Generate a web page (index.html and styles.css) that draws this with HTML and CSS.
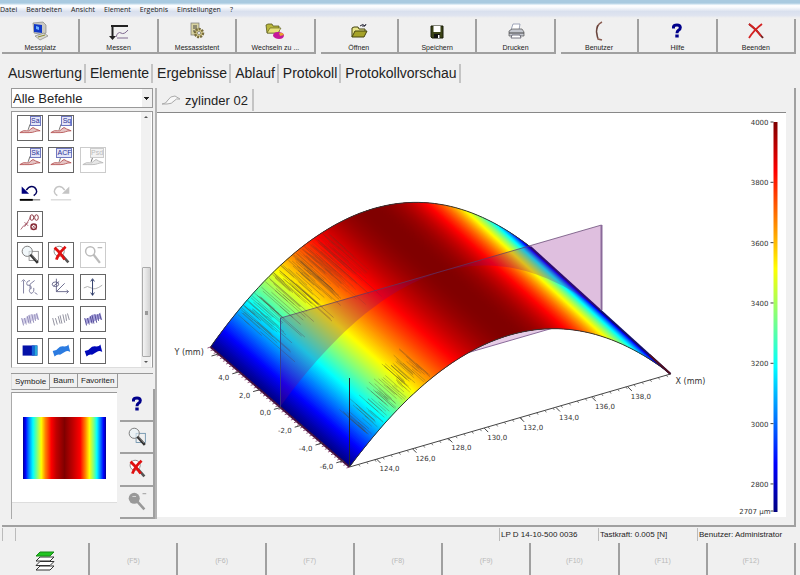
FILE: index.html
```html
<!DOCTYPE html>
<html lang="de">
<head>
    <meta charset="UTF-8">
    <meta name="viewport" content="width=device-width, initial-scale=1.0">
    <title>Auswertung</title>
    <link rel="stylesheet" href="styles.css">
</head>
<body>
    <!-- Gemeinsame Symbole -->
    <svg class="defs" aria-hidden="true">
        <symbol id="i-help" viewBox="0 0 20 20">
            <path d="M6.500 7.500V5.800Q6.800 4 10 4t3.300 2.400Q13.300 8.200 11.500 9.300 10 10.300 10 12.300" fill="none" stroke="#00008b" stroke-width="3"/>
            <rect x="8.300" y="13.500" width="3.400" height="3" fill="#00008b"/>
        </symbol>
        <symbol id="i-lens" viewBox="0 0 26 26">
            <rect x="12" y="9" width="10" height="10" fill="none" stroke="currentColor" stroke-width=".8"/>
            <circle cx="10" cy="9" r="5.500" fill="#eaf3f8" fill-opacity=".6" stroke="#777"/>
            <path d="M13.500 12.500l8 9" stroke="#333" stroke-width="2.800"/>
            <path d="M14.500 12.500l6 7" stroke="#bbb" stroke-width=".6"/>
        </symbol>
        <symbol id="i-lensx" viewBox="0 0 26 26">
            <circle cx="11" cy="9" r="5.500" fill="#fff" stroke="#888"/>
            <path d="M14 13l7 8" stroke="#555" stroke-width="2.800"/>
            <path d="M6 5q6 5 11 13M18 4q-7 6-10 14" fill="none" stroke="#e01010" stroke-width="3"/>
        </symbol>
        <symbol id="i-lensback" viewBox="0 0 26 26">
            <circle cx="10" cy="9" r="5" fill="none" stroke="currentColor" stroke-width="1.600"/>
            <path d="M13.500 12.500l7 9" stroke="currentColor" stroke-width="2.500"/>
            <path d="M18 5h5" stroke="currentColor" stroke-width="1.400"/>
        </symbol>
        <symbol id="i-curve" viewBox="0 0 26 26">
            <path d="M2 18q4-3 7-2t5-2 5 0l5 2q-4 0-6 1t-6 1-10 0z" fill="currentColor" fill-opacity=".35" stroke="currentColor"/>
            <path d="M13 9l-2 6" stroke="#444" stroke-width=".8"/>
        </symbol>
        <symbol id="i-wave" viewBox="0 0 26 26">
            <path d="M4 13q4 0 6-3t7-2q3 0 4-2l2 8q-3-2-6 0t-5 3q-3-1-6 2z"/>
        </symbol>
        <symbol id="i-mesh" viewBox="0 0 26 26">
            <path d="M4 12l2 8M7 12l2 7M10 10l2 8M12 9l2 9M15 8l2 9M18 8l1 7M20 7l2 7" fill="none" stroke="currentColor"/>
        </symbol>
    </svg>

    <div class="titlebar"></div>

    <nav class="menubar">
        <a href="#">Datei</a>
        <a href="#">Bearbeiten</a>
        <a href="#">Ansicht</a>
        <a href="#">Element</a>
        <a href="#">Ergebnis</a>
        <a href="#">Einstellungen</a>
        <a href="#">?</a>
    </nav>

    <!-- Werkzeugleiste -->
    <div class="toolbar">
        <div class="tool-group four">
            <button class="tool">
                <svg viewBox="0 0 20 20">
                    <path d="M3 2l10-1 3 3v8l-3 2-9-2z" fill="#c9c9c2" stroke="#777" stroke-width=".6"/>
                    <path d="M4 3l8 1v8l-8-1z" fill="#1038c8"/><path d="M6 5l3 1v3l-3-1z" fill="#6fb1ff"/>
                    <path d="M5 15l9-3 4 3-8 4z" fill="#d8d8d0" stroke="#777" stroke-width=".6"/>
                    <path d="M8 16l7-2" stroke="#8a8a30"/>
                </svg>
                Messplatz
            </button>
            <button class="tool">
                <svg viewBox="0 0 20 20">
                    <path d="M2 5h17M3.500 5v10" stroke="#222" stroke-width="2" fill="none"/>
                    <path d="M0 15h7l-3.500 4z" fill="#222"/>
                    <path d="M7 16q2-6 5-4t7-3M8 17h11" fill="none" stroke="#806a90"/>
                </svg>
                Messen
            </button>
            <button class="tool">
                <svg viewBox="0 0 20 20">
                    <rect x="4" y="2" width="8" height="12" fill="#d9d3a0" stroke="#777" stroke-width=".7"/>
                    <path d="M6 5h4M6 7h4M6 10h4" stroke="#444"/>
                    <circle cx="12" cy="12" r="4" fill="#d8cd8c" stroke="#776c3c" stroke-width="2.500" stroke-dasharray="2 1"/>
                    <circle cx="12" cy="12" r="1.500" fill="#fff" stroke="#555" stroke-width=".6"/>
                </svg>
                Messassistent
            </button>
            <button class="tool">
                <svg viewBox="0 0 20 20">
                    <path d="M1 4l2-1h4l1 2h6v7H2z" fill="#b9b73c" stroke="#55551a" stroke-width=".8"/>
                    <path d="M2 12l3-5h11l-3 5z" fill="#e6e27a" stroke="#55551a" stroke-width=".6"/>
                    <path d="M8 15q0-4 5-4 5 0 6 3 0 4-5 4-4 0-6-3z" fill="#c4189a"/>
                    <path d="M14 12q4-1 5 2l-4 1z" fill="#e8a030"/>
                </svg>
                Wechseln zu ...
            </button>
        </div>
        <div class="tool-group three">
            <button class="tool">
                <svg viewBox="0 0 20 20">
                    <path d="M3 16V7l2-1h4l1 2h6v3" fill="#e8e58a" stroke="#44440e"/>
                    <path d="M3 16l3-6h12l-3 6z" fill="#a5a228" stroke="#44440e"/>
                    <path d="M11 5q3-3 5 0l1-2M16 5h-3" fill="none" stroke="#223"/>
                </svg>
                Öffnen
            </button>
            <button class="tool">
                <svg viewBox="0 0 20 20">
                    <path d="M4 5h12v12H5l-1-1z" fill="#3a4216" stroke="#181c08"/>
                    <rect x="6.500" y="5" width="7" height="6" fill="#fff"/>
                    <rect x="7" y="13" width="6" height="4" fill="#111"/><rect x="11" y="14" width="1.500" height="3" fill="#fff"/>
                </svg>
                Speichern
            </button>
            <button class="tool">
                <svg viewBox="0 0 20 20">
                    <path d="M7 3h7l-1 6H5z" fill="#fff" stroke="#8890a8" stroke-width=".8"/>
                    <path d="M3 10l3-2h10l2 3v4H3z" fill="#c4c7cf" stroke="#555" stroke-width=".7"/>
                    <path d="M3 12h15" stroke="#444"/><path d="M6 14h8l1 3H5z" fill="#fff" stroke="#556" stroke-width=".8"/>
                </svg>
                Drucken
            </button>
        </div>
        <div class="tool-group three">
            <button class="tool">
                <svg viewBox="0 0 20 20">
                    <path d="M13 1q-6 3-5.500 10 .5 5 1.500 7l4 1" fill="none" stroke="#8a5c50" stroke-width="1.500"/>
                    <path d="M9 4q-3 6 0 13" fill="none" stroke="#3a2a2a" stroke-width=".6"/>
                </svg>
                Benutzer
            </button>
            <button class="tool"><svg><use href="#i-help"/></svg>Hilfe</button>
            <button class="tool">
                <svg viewBox="0 0 20 20">
                    <path d="M3 3q8 6 14 14" fill="none" stroke="#6b2020" stroke-width="1.800"/>
                    <path d="M3 3q6 4 12 12M16 3Q8 9 3 17" fill="none" stroke="#d42222" stroke-width="1.800"/>
                </svg>
                Beenden
            </button>
        </div>
    </div>

    <nav class="tabs">
        <a href="#">Auswertung</a>
        <a href="#">Elemente</a>
        <a href="#">Ergebnisse</a>
        <a href="#">Ablauf</a>
        <a href="#">Protokoll</a>
        <a href="#">Protokollvorschau</a>
    </nav>

    <div class="workspace">
        <!-- Linke Seite: Befehle und Vorschau -->
        <aside class="sidebar">
            <select class="filter" aria-label="Befehle">
                <option>Alle Befehle</option>
            </select>

            <div class="commands">
                <div class="command-grid">
                    <button class="cmd" aria-label="Sa"><svg class="red"><use href="#i-curve"/></svg><span class="tag">Sa</span></button>
                    <button class="cmd" aria-label="Sq"><svg class="red"><use href="#i-curve"/></svg><span class="tag">Sq</span></button>
                    <i></i>
                    <button class="cmd" aria-label="Sk"><svg class="red"><use href="#i-curve"/></svg><span class="tag">Sk</span></button>
                    <button class="cmd" aria-label="ACF"><svg class="red"><use href="#i-curve"/></svg><span class="tag">ACF</span></button>
                    <button class="cmd off" aria-label="Psd" disabled><svg><use href="#i-curve"/></svg><span class="tag">Psd</span></button>
                    <button class="cmd flat" aria-label="Zurück">
                        <svg viewBox="0 0 26 26">
                            <path d="M9 11q4-6 9-3 5 5-1 9" fill="none" stroke="#00005c" stroke-width="1.600"/>
                            <path d="M4 7v8h8z" fill="#00007c"/><path d="M2 21.500h22" stroke="#555"/><path d="M2 21.500h14" stroke="#000" stroke-width="2"/>
                        </svg>
                    </button>
                    <button class="cmd flat" aria-label="Vor" disabled>
                        <svg viewBox="0 0 26 26">
                            <path d="M17 11q-4-6-9-3-5 5 1 9" fill="none" stroke="#c4c4c4" stroke-width="1.600"/>
                            <path d="M22 7v8h-8z" fill="#c4c4c4"/><path d="M2 21.500h22" stroke="#c8c8c8"/>
                        </svg>
                    </button>
                    <i></i>
                    <button class="cmd" aria-label="Ausschneiden">
                        <svg viewBox="0 0 26 26">
                            <path d="M3 19q3-5 6-6l5-8M7 11l4 4M11 11l-4 5" fill="none" stroke="#a05060" stroke-width=".9"/>
                            <ellipse cx="15" cy="6" rx="2" ry="3" fill="none" stroke="#862a35"/><ellipse cx="20" cy="6" rx="2" ry="3" fill="none" stroke="#862a35"/>
                            <circle cx="17" cy="16" r="3" fill="none" stroke="#862a35" stroke-width="1.500"/><path d="M14 13l6 6M20 13l-6 6" stroke="#862a35" stroke-width=".7"/>
                        </svg>
                    </button>
                    <i></i><i></i>
                    <button class="cmd" aria-label="Zoom"><svg><use href="#i-lens"/></svg></button>
                    <button class="cmd" aria-label="Zoom aus"><svg><use href="#i-lensx"/></svg></button>
                    <button class="cmd off" aria-label="Zoom zurück" disabled><svg><use href="#i-lensback"/></svg></button>
                    <button class="cmd" aria-label="Drehen">
                        <svg viewBox="0 0 26 26" fill="none" stroke="#6a6a90" stroke-width=".9">
                            <path d="M6 6v14M4 7l2-2 2 2M13 6q-5 1-3 5 5 0 4 3M18 6l-5 4v5M15 14q-5 2-1 6 4-1 3-6M18 19l3 2"/>
                        </svg>
                    </button>
                    <button class="cmd" aria-label="Achse">
                        <svg viewBox="0 0 26 26" fill="none" stroke="#55557c" stroke-width=".9">
                            <path d="M8 4v14h13M8 18l9-9M19 16l2 2-2 2"/><ellipse cx="7" cy="10" rx="3.500" ry="2.500"/><path d="M5 12l6-5"/>
                        </svg>
                    </button>
                    <button class="cmd" aria-label="Schnitt">
                        <svg viewBox="0 0 26 26" fill="none">
                            <path d="M3 14q4-3 8 0t12-3" stroke="#aaa"/><path d="M12.500 5v17M10.500 7l2-3 2 3M10.500 19l2 3 2-3" stroke="#223060"/>
                        </svg>
                    </button>
                    <button class="cmd lilac" aria-label="Linien">
                        <svg><use href="#i-wave" fill="#d6d2ea"/><use href="#i-mesh"/></svg>
                    </button>
                    <button class="cmd gray" aria-label="Profile"><svg><use href="#i-mesh"/></svg></button>
                    <button class="cmd violet" aria-label="Gitter">
                        <svg><use href="#i-wave" fill="#a9a3dc"/><use href="#i-mesh"/></svg>
                    </button>
                    <button class="cmd" aria-label="Farbkarte">
                        <svg viewBox="0 0 26 26">
                            <rect x="5" y="7" width="16" height="11" fill="#0512a8"/><rect x="15" y="7" width="3" height="11" fill="#1464d8"/><rect x="18" y="7" width="3" height="11" fill="#28a8d8"/>
                        </svg>
                    </button>
                    <button class="cmd" aria-label="Fläche hell"><svg fill="#2b7be0"><use href="#i-wave"/></svg></button>
                    <button class="cmd" aria-label="Fläche"><svg fill="#0008b8"><use href="#i-wave"/></svg></button>
                </div>
                <div class="scrollbar">
                    <span class="arrow up"></span>
                    <span class="thumb"></span>
                    <span class="arrow down"></span>
                </div>
            </div>

            <nav class="subtabs">
                <a href="#" class="active">Symbole</a>
                <a href="#">Baum</a>
                <a href="#">Favoriten</a>
            </nav>

            <div class="preview-row">
                <div class="preview">
                    <div class="preview-canvas"><div class="heatmap"></div></div>
                </div>
                <div class="preview-tools">
                    <button aria-label="Hilfe"><svg class="small"><use href="#i-help"/></svg></button>
                    <button class="blue" aria-label="Zoom"><svg><use href="#i-lens"/></svg></button>
                    <button aria-label="Zoom aus"><svg><use href="#i-lensx"/></svg></button>
                    <button aria-label="Zoom zurück" disabled>
                        <svg viewBox="0 0 26 26">
                            <circle cx="10" cy="9" r="6" fill="#999"/><path d="M8 7h4" stroke="#ddd"/>
                            <path d="M13 12l8 9" stroke="#999" stroke-width="2.800"/><path d="M19 4h4" stroke="#999"/>
                        </svg>
                    </button>
                </div>
            </div>
        </aside>

        <!-- 3D-Ansicht -->
        <main class="viewer">
            <div class="doc-tabs">
                <a href="#">
                    <svg viewBox="0 0 20 12"><path d="M1 10q4 0 6-4t7-4l5 3q-4-1-6 2t-7 3z" fill="#f8f8f8" stroke="#aaa"/></svg>
                    zylinder 02
                </a>
            </div>
            <div class="plot">
                <svg id="plot" viewBox="0 0 628 404" role="img" aria-label="zylinder 02"></svg>
            </div>
        </main>
    </div>

    <div class="statusbar">
        <span class="cell tiny"></span>
        <span class="cell grow"></span>
        <span class="cell">LP D 14-10-500 0036</span>
        <span class="cell">Tastkraft: 0.005 [N]</span>
        <span class="cell">Benutzer: Administrator</span>
    </div>

    <div class="fkeys">
        <button aria-label="Ebenen">
            <svg viewBox="0 0 20 22">
                <g fill="#fff" stroke="#333">
                    <path d="M1 20l4-4h14l-4 4z"/><path d="M1 15.500l4-4h14l-4 4z"/><path d="M1 11l4-4h14l-4 4z"/>
                </g>
                <path d="M1 6l4-4h14l-4 4z" fill="#22c522" stroke="#178a17"/>
            </svg>
        </button>
        <button disabled>(F5)</button>
        <button disabled>(F6)</button>
        <button disabled>(F7)</button>
        <button disabled>(F8)</button>
        <button disabled>(F9)</button>
        <button disabled>(F10)</button>
        <button disabled>(F11)</button>
        <button disabled>(F12)</button>
    </div>

    <script src="plot.js"></script>
</body>
</html>
```

FILE: styles.css
```css
/* Grundlagen */
* {
    box-sizing: border-box;
}
body {
    margin: 0;
    height: 100vh;
    display: flex;
    flex-direction: column;
    overflow: hidden;
    background: #f0f0f0;
    color: #222;
    font-family: "Liberation Sans", Arial, sans-serif;
    font-size: 8px;
}
a {
    color: inherit;
    text-decoration: none;
}
button {
    margin: 0;
    padding: 0;
    border: 0;
    background: none;
    color: inherit;
    font: inherit;
}
.defs {
    position: absolute;
    width: 0;
    height: 0;
}

/* Titel und Menü */
.titlebar {
    height: 5px;
    flex: none;
    background: linear-gradient(#a9cae0 60%, #eef6fb);
}
.menubar {
    display: flex;
    gap: 9px;
    height: 13px;
    flex: none;
    background: linear-gradient(#fbfcfe 15%, #d9e0ee 50%, #dfe4f0 80%, #f0f0f0);
    font-family: "Open Sans", sans-serif;
    font-size: 7px;
    line-height: 10px;
}

/* ========== Werkzeugleiste ========== */
.toolbar {
    display: flex;
    gap: 5px;
    height: 36px;
    flex: none;
    margin: 0 4px 0 2px;
    padding-top: 1px;
}
.tool-group {
    display: flex;
}
.four {
    flex: 4;
}
.three {
    flex: 3;
}
.tool {
    flex: 1;
    display: flex;
    flex-direction: column;
    align-items: center;
    border-right: 2px solid #a0a0a0;
    border-bottom: 2px solid #a0a0a0;
    font-size: 7px;
    line-height: 8px;
    padding-top: 2px;
}
.tool svg {
    width: 20px;
    height: 20px;
    margin-bottom: 3px;
}

/* Hauptreiter */
.tabs {
    display: flex;
    flex: none;
    height: 34px;
    padding: 10px 0 5px 4px;
    font-size: 14px;
    line-height: 19px;
}
.tabs a {
    padding: 0 2px 0 4px;
    border-right: 2px solid #c4c4c4;
}

/* ========== Arbeitsbereich ========== */
.workspace {
    flex: 1;
    min-height: 0;
    display: flex;
    margin: 0 4px 0 2px;
    border-right: 2px solid #a0a0a0;
    border-bottom: 2px solid #a0a0a0;
}
.sidebar {
    width: 155px;
    flex: none;
    display: flex;
    flex-direction: column;
    padding-left: 9px;
    border-right: 2px solid #b4b4b4;
    margin-bottom: 6px;
}
.filter {
    appearance: none;
    width: 142px;
    height: 20px;
    border: 1px solid #999;
    border-radius: 0;
    padding: 0 1px;
    background: linear-gradient(#222, #222) 132px 8px / 5px 1px no-repeat,
        linear-gradient(#222, #222) 133px 9px / 3px 1px no-repeat,
        linear-gradient(#222, #222) 134px 10px / 1px 1px no-repeat,
        linear-gradient(90deg, #fff 130px, #f0f0f0 130px);
    color: #222;
    font-family: inherit;
    font-size: 13px;
}
.commands {
    flex: 1;
    min-height: 0;
    display: flex;
    justify-content: space-between;
    width: 142px;
    margin-top: 3px;
    padding: 0 1px 0 2px;
    border: 1px solid #999;
    border-bottom-color: #ddd;
    background: #fff;
}
.command-grid {
    display: grid;
    grid-template-columns: repeat(3, 1fr);
    grid-template-rows: repeat(8, 1fr);
    place-items: center;
    width: 95px;
}
.cmd {
    position: relative;
    width: 26px;
    height: 26px;
    border: 1px solid #666;
}
.cmd svg {
    display: block;
    width: 24px;
    height: 24px;
    color: #777;
}
.cmd .red {
    color: #b85a5a;
}
.lilac svg {
    color: #8c87b4;
}
.gray svg {
    color: #8a8a98;
}
.violet svg {
    color: #4d4694;
}
.tag {
    position: absolute;
    top: 0;
    right: 1px;
    min-width: 11px;
    border: 1px solid #7078c0;
    background: #e4e6f8;
    color: #2a2f96;
    font-size: 7px;
    line-height: 8px;
}
.cmd.off {
    border-color: #ccc;
}
.off svg {
    color: #bbb;
}
.off .tag {
    border-color: #ccc;
    background: #f2f2f2;
    color: #bbb;
}
.cmd.flat {
    border-color: transparent;
}
.scrollbar {
    display: flex;
    flex-direction: column;
    align-items: center;
    width: 10px;
    background: #f1f1f1;
    padding: 4px 0;
}
.thumb {
    width: 9px;
    height: 90px;
    margin: auto 0 4px;
    border: 1px solid #aaa;
    border-radius: 1px;
    background: linear-gradient(#999, #999) 2px 43px / 3px 4px no-repeat,
        linear-gradient(90deg, #f4f4f4, #d2d2d2);
}
.arrow {
    border: 2px solid transparent;
}
.up {
    border-top: 0;
    border-bottom-color: #555;
}
.down {
    border-bottom: 0;
    border-top-color: #555;
}

/* Reiter unter den Symbolen */
.subtabs {
    display: flex;
    align-items: flex-start;
    flex: none;
    width: 142px;
    height: 16px;
    margin-top: 5px;
    border-top: 1px solid #999;
    line-height: 13px;
}
.subtabs a {
    padding: 0 3px;
    border: solid #999;
    border-width: 0 1px 1px 0;
}
.subtabs .active {
    line-height: 15px;
    border-left: 1px solid #ddd;
}

/* Vorschau */
.preview-row {
    display: flex;
    flex: none;
    height: 130px;
    gap: 3px;
}
.preview {
    flex: 1;
    margin-top: 3px;
    border-left: 1px solid #aaa;
}
.preview-canvas {
    height: 111px;
    padding: 24px 11px;
    border-top: 1px solid #999;
    border-bottom: 1px solid #ddd;
    background: #fff;
}
.heatmap {
    height: 62px;
    background: linear-gradient(90deg, #00008f, #0000ff 3%, #0080ff 7%, #00ffff 12%, #80ff80 17%, #ffff00 22%, #ff8000 27%, #ff0000 34%, #c00000 40%, #800000 50%, #c00000 60%, #ff0000 69%, #ff8000 75%, #ffff00 80%, #80ff80 85%, #00ffff 89%, #0080ff 93%, #0000ff 97%, #00008f);
}
.preview-tools {
    width: 35px;
    display: flex;
    flex-direction: column;
}
.preview-tools button {
    flex: 1;
    display: flex;
    align-items: center;
    justify-content: center;
    border-right: 2px solid #a0a0a0;
    border-bottom: 2px solid #a0a0a0;
}
.preview-tools svg {
    width: 24px;
    height: 24px;
}
.preview-tools .small {
    width: 20px;
    height: 20px;
}
.blue svg {
    color: #5580a0;
}

/* ========== 3D-Ansicht ========== */
.viewer {
    flex: 1;
    min-width: 0;
    display: flex;
    flex-direction: column;
    padding: 0 8px 8px 0;
}
.doc-tabs {
    display: flex;
    flex: none;
    height: 24px;
    padding: 1px 4px 1px;
    font-size: 13px;
}
.doc-tabs a {
    display: flex;
    align-items: center;
    gap: 4px;
    padding-right: 4px;
    border-right: 2px solid #c4c4c4;
}
.doc-tabs svg {
    width: 20px;
    height: 12px;
}
.plot {
    flex: 1;
    min-height: 0;
    border-top: 1px solid #888;
    background: #fff;
}
.plot svg {
    display: block;
    width: 100%;
    height: 100%;
}
.plot text {
    font-family: "DejaVu Sans", sans-serif;
    font-size: 7px;
    fill: #333;
}
.plot .axis-title {
    font-size: 8px;
}

/* Statuszeile */
.statusbar {
    display: flex;
    flex: none;
    height: 16px;
    margin: 0 4px 0 2px;
    padding-top: 1px;
    line-height: 14px;
}
.cell {
    width: 99px;
    height: 13px;
    padding-left: 1px;
    border-left: 1px solid #bbb;
    white-space: nowrap;
}
.tiny {
    width: 13px;
}
.grow {
    flex: 1;
}

/* Funktionstasten */
.fkeys {
    display: grid;
    grid-template-columns: repeat(9, 1fr);
    flex: none;
    height: 32px;
    margin: 0 4px 0 2px;
}
.fkeys button {
    display: flex;
    align-items: center;
    justify-content: center;
    border-right: 2px solid #a0a0a0;
    color: #b8b8b8;
    font-size: 7px;
    padding-top: 3px;
}
.fkeys svg {
    width: 20px;
    height: 22px;
}
```

FILE: plot.js
```js
const svg = document.getElementById('plot');
const NS = 'http://www.w3.org/2000/svg';

function add(name, attrs, text) {
    const el = document.createElementNS(NS, name);
    for (const key in attrs) el.setAttribute(key, attrs[key]);
    if (text) el.textContent = text;
    svg.appendChild(el);
    return el;
}

function line(x1, y1, x2, y2, stroke, width = 1, opacity = 1) {
    add('line', { x1, y1, x2, y2, stroke, 'stroke-width': width, 'stroke-opacity': opacity });
}

// Farbskala blau - cyan - gelb - rot
function jet(s) {
    const c = (k) => Math.round(255 * Math.max(0, Math.min(1, 1.5 - Math.abs(4 * s - k))));
    return `rgb(${c(3)},${c(2)},${c(1)})`;
}

// Punkt auf der Fläche: t entlang X, v von hinten (0) nach vorne (1)
function point(t, v) {
    const back = [53 + 320 * t, 234 - 100 * t - 350 * t * (1 - t)];
    const front = [192 + 321 * t, 354 - 93 * t - 342 * t * (1 - t)];
    return [back[0] + (front[0] - back[0]) * v, back[1] + (front[1] - back[1]) * v];
}

function arc(v, from = 0, to = 1) {
    const pts = [];
    for (let i = 0; i <= 60; i++) pts.push(point(from + (to - from) * i / 60, v));
    return pts;
}

const join = (pts) => pts.map((p) => p.map((n) => n.toFixed(1)).join(',')).join(' ');

// Schnittebene, Teil unter der Fläche
add('polygon', { points: join([[123, 294], ...arc(0.5), [444, 201]]), fill: '#800080', 'fill-opacity': 0.2 });
line(123, 294, 444, 201, '#8a6a9a');

// Zylinderfläche, jeder Streifen reicht unter die folgenden
const steps = 320;
for (let i = 0; i < steps; i++) {
    const a = i / steps;
    const b = Math.min(1, (i + 5) / steps);
    const m = (i + 0.5) / steps;
    const s = 4 * m * (1 - m);
    add('polygon', {
        points: join([point(a, 0), point(b, 0), point(b, 1), point(a, 1)]),
        fill: jet(Math.pow(s, 1.08))
    });
}

// Messrauschen an den Rändern
let seed = 7;
function rnd() {
    seed = (seed * 16807) % 2147483647;
    return seed / 2147483647;
}
for (let i = 0; i < 170; i++) {
    const t = 0.08 + 0.28 * rnd();
    const start = 0.22 * rnd() * rnd();
    const a = point(t, start);
    const b = point(t, start + 0.08 + 0.22 * rnd());
    line(...a, ...b, '#504030', 0.7, t > 0.26 ? 0.25 : 0.45);
}
for (let i = 0; i < 80; i++) {
    const t = 0.07 + 0.2 * rnd();
    const a = point(t, 0.99 - 0.08 * rnd());
    const b = point(t, 0.9 - 0.14 * rnd());
    line(...a, ...b, '#504030', 0.7, 0.4);
}

// Konturen
add('polyline', { points: join(arc(0)), fill: 'none', stroke: '#333' });
add('polyline', { points: join(arc(1)), fill: 'none', stroke: '#333' });
line(...point(1, 0), ...point(1, 1), '#14106a', 2);
line(...point(0, 0), ...point(0, 1), '#401040', 2);
line(...point(1, 0.85), ...point(1, 1), '#501020', 2);

// Schnittebene, Teil über der Fläche
add('polygon', { points: join([[123, 205], ...arc(0.5), [444, 112]]), fill: '#800080', 'fill-opacity': 0.25 });
line(123, 205, 444, 112, '#5a3a6a', 1, 0.7);
line(123, 205, 123, 294, '#3a3a80', 1, 0.8);
line(444, 112, 444, 197, '#8a6a9a', 2);
line(192, 265, 192, 354, '#223', 1);

// X-Achse
line(192, 354, 513, 261, '#444');
for (let i = 0; i <= 38; i++) {
    const x = 201 + i * 8.1;
    line(x, 354 - (x - 192) * 0.29, x + 1.5, 356 - (x - 192) * 0.29, '#555', 0.8);
}
for (let i = 0; i < 8; i++) {
    const x = 219 + i * 35.9;
    const y = 346 - i * 10.3;
    line(x, y, x + 4, y + 4, '#444');
    add('text', { x: x + 3, y: y + 12 }, `${124 + i * 2},0`);
}
add('text', { x: 518, y: 271, class: 'axis-title' }, 'X (mm)');

// Y-Achse
for (let i = 0; i < 46; i++) {
    const [x, y] = point(0, i / 45);
    line(x, y, x - 3, y + 1, '#7a3060', 0.8);
}
for (let i = 0; i < 7; i++) {
    const x = 61 + i * 20.8;
    const y = 241 + i * 17.8;
    line(x, y, x - 7, y + 2, '#444');
    if (i > 0) add('text', { x: x - 10, y: y + 8, 'text-anchor': 'end' }, `${6 - i * 2},0`);
}
add('text', { x: 17, y: 242, class: 'axis-title' }, 'Y (mm)');

// Farblegende
const barTop = 9;
const barHeight = 390;
for (let i = 0; i < barHeight; i++) {
    add('rect', { x: 616, y: barTop + i, width: 4, height: 1, fill: jet(1 - i / barHeight) });
}
for (let value = 4000; value >= 2800; value -= 200) {
    const y = barTop + (4000 - value) / 1293 * barHeight;
    line(613, y, 616, y, '#444');
    add('text', { x: 611, y: y + 3, 'text-anchor': 'end' }, String(value));
}
line(613, 398, 616, 398, '#444');
add('text', { x: 613, y: 401, 'text-anchor': 'end' }, '2707 µm');
```
